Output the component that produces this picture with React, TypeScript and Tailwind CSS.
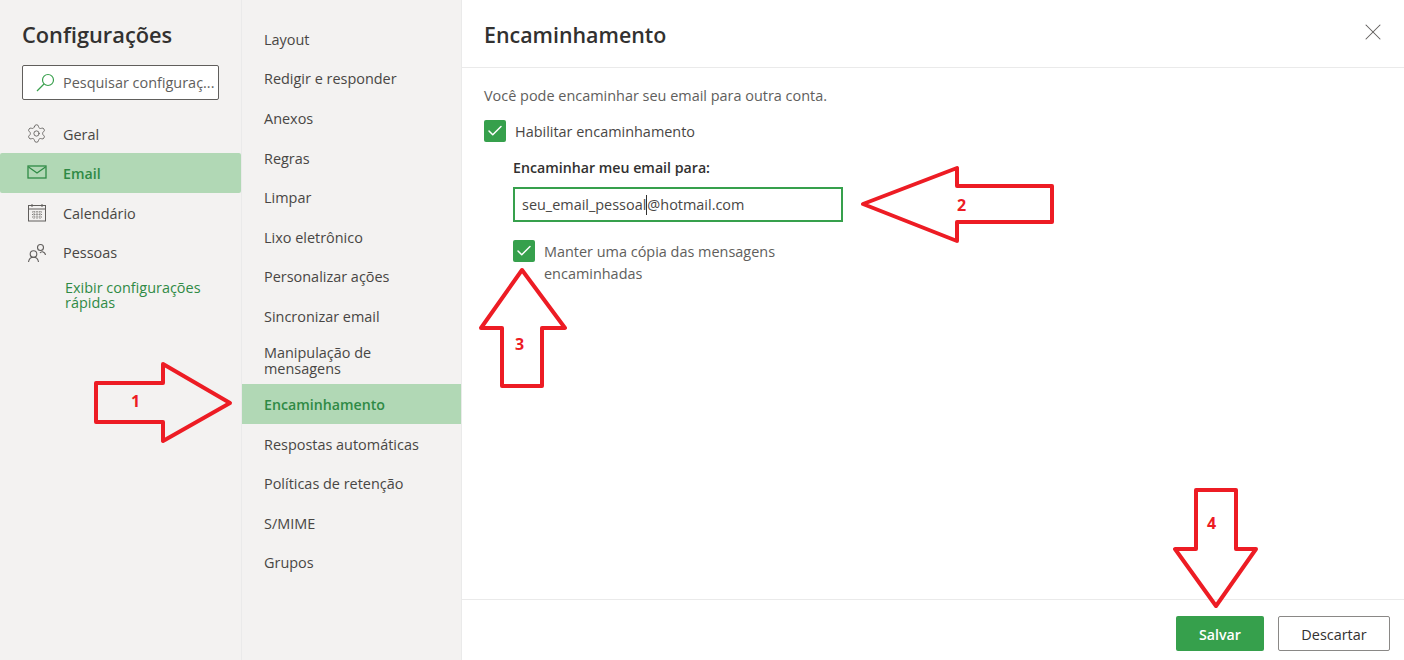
import { Check, Settings, X } from 'lucide-react';

const mailSections = [
  { label: 'Layout', height: 'h-[39px]' },
  { label: 'Redigir e responder', height: 'h-[40px]' },
  { label: 'Anexos', height: 'h-[40px]' },
  { label: 'Regras', height: 'h-[40px]' },
  { label: 'Limpar', height: 'h-[39px] pb-[1px]' },
  { label: 'Lixo eletrônico', height: 'h-[40px]' },
  { label: 'Personalizar ações', height: 'h-[39px] pb-[1px]' },
  { label: 'Sincronizar email', height: 'h-[40px]' },
  { label: 'Manipulação de mensagens', height: 'h-[47px]' },
  { label: 'Encaminhamento', height: 'h-[40px] pt-[1px]', active: true },
  { label: 'Respostas automáticas', height: 'h-[40px] pt-[1px]' },
  { label: 'Políticas de retenção', height: 'h-[39px]' },
  { label: 'S/MIME', height: 'h-[40px] pt-[1px]' },
  { label: 'Grupos', height: 'h-[39px]' },
];

function MailIcon() {
  return (
    <svg width="20" height="14" viewBox="0 0 20 14" fill="none" stroke="#2f8a45" strokeWidth="1.3">
      <rect x="1" y="1" width="18" height="12" />
      <path d="M1.5 2l8.500 6 8.500-6" />
    </svg>
  );
}

function CalendarIcon() {
  return (
    <svg width="20" height="20" viewBox="0 0 20 20" fill="none" stroke="#605e5c" strokeWidth="1">
      <rect x="1.5" y="2.500" width="17" height="15.500" />
      <path d="M1.500 6h17M5 1v3M15 1v3" />
      <path d="M5 9h10M5 11.500h10M5 14h10M7 8v8M10 8v8M13 8v8" strokeWidth="0.8" strokeDasharray="1.2 1" />
    </svg>
  );
}

function PeopleIcon() {
  return (
    <svg width="20" height="20" viewBox="0 0 20 20" fill="none" stroke="#605e5c" strokeWidth="1.1">
      <circle cx="6.500" cy="11" r="3.300" />
      <path d="M1.500 19c.4-3 2.300-4.800 5-4.800s4.600 1.800 5 4.800" />
      <circle cx="13.500" cy="4.500" r="3" />
      <path d="M13 10c.5-.8 1.500-1.400 2.500-1.300 1.800.3 2.700 1.600 3 3.300" />
    </svg>
  );
}

function SearchIcon() {
  return (
    <svg width="19" height="19" viewBox="0 0 19 19" fill="none" stroke="#3aa04e" strokeWidth="1.2">
      <circle cx="12" cy="7" r="5.500" />
      <path d="M8 11l-7 7" />
    </svg>
  );
}

function GreenCheck() {
  return (
    <span className="flex h-[22px] w-[22px] shrink-0 items-center justify-center rounded-[2px] bg-[#36a04c]">
      <Check className="h-[18px] w-[18px] text-white" strokeWidth={2} />
    </span>
  );
}

function Arrow({ points }: { points: string }) {
  return (
    <svg className="absolute left-0 top-0" width="1404" height="660" fill="none" stroke="#ed1c24" strokeWidth="4" strokeLinejoin="round">
      <polygon points={points} />
    </svg>
  );
}

function Step({ className, children }: { className: string; children: string }) {
  return (
    <span className={`absolute text-[16px] font-bold leading-none text-[#ed1c24] ${className}`}>
      {children}
    </span>
  );
}

export default function App() {
  return (
    <div className="relative flex h-[660px] w-[1404px] overflow-hidden bg-white font-['Open_Sans',sans-serif] text-[14.45px] text-[#323130]">
      {/* left nav */}
      <aside className="w-[242px] shrink-0 border-r border-[#eaeaea] bg-[#f3f2f1]">
        <h1 className="pl-[22px] pt-[20px] text-[21.8px] font-semibold leading-[30px] text-[#323130]">Configurações</h1>
        <div className="ml-[22px] mt-[15px] flex h-[35px] w-[197px] items-center gap-[8px] overflow-hidden rounded-[2px] border border-[#605e5c] bg-white pl-[13px]">
          <SearchIcon />
          <span className="whitespace-nowrap text-[#605e5c]">Pesquisar configuraç...</span>
        </div>
        <nav className="mt-[14px]">
          <div className="flex h-[39px] items-center pl-[27px] text-[#484644]">
            <span className="-ml-[1px] w-[37px]"><Settings className="h-[21px] w-[21px] text-[#605e5c]" strokeWidth={1} /></span>
            <span className="mt-[2px]">Geral</span>
          </div>
          <div className="flex h-[40px] items-center rounded-[2px] bg-[#b1d8b5] pl-[27px] text-[14.2px] font-semibold text-[#2f8a45]">
            <span className="-mt-[2px] w-[36px]"><MailIcon /></span>
            <span className="mt-[1px]">Email</span>
          </div>
          <div className="flex h-[40px] items-center pl-[27px] text-[#484644]">
            <span className="w-[36px]"><CalendarIcon /></span>
            <span className="mt-[2px]">Calendário</span>
          </div>
          <div className="flex h-[39px] items-center pl-[27px] text-[#484644]">
            <span className="w-[36px]"><PeopleIcon /></span>
            <span>Pessoas</span>
          </div>
        </nav>
        <p className="ml-[65px] mt-[8px] w-[150px] leading-[15px] text-[#2f8a45]">Exibir configurações rápidas</p>
      </aside>

      {/* mail sections */}
      <nav className="w-[220px] shrink-0 border-r border-[#eaeaea] bg-[#f3f2f1] pt-[20px]">
        {mailSections.map((s) => (
          <div
            key={s.label}
            className={`flex items-center pl-[22px] pr-[20px] leading-[16px] ${s.height} ${
              s.active ? 'bg-[#b1d8b5] text-[14.2px] font-semibold text-[#2f8a45]' : 'text-[#484644]'
            }`}
          >
            {s.label}
          </div>
        ))}
      </nav>

      {/* forwarding panel */}
      <main className="flex min-w-0 flex-1 flex-col">
        <header className="flex h-[68px] shrink-0 items-start justify-between border-b border-[#eaeaea] pl-[22px] pr-[17px] pt-[20px]">
          <h2 className="text-[21.4px] font-semibold leading-[30px]">Encaminhamento</h2>
          <X className="-mt-[2px] h-[28px] w-[28px] text-[#605e5c]" strokeWidth={0.9} />
        </header>
        <section className="flex-1 pl-[22px] pt-[18px]">
          <p className="leading-[20px] text-[#605e5c]">Você pode encaminhar seu email para outra conta.</p>
          <label className="mt-[14px] flex h-[22px] items-start gap-[9px] text-[#484644]">
            <GreenCheck />
            <span className="mt-[1px] leading-[21px]">Habilitar encaminhamento</span>
          </label>
          <div className="ml-[29px] mt-[16px] w-[330px]">
            <div className="text-[14.2px] font-semibold leading-[20px]">Encaminhar meu email para:</div>
            <div className="mt-[9px] flex h-[35px] items-center border-2 border-[#36a04c] pl-[7px] text-[#484644]">
              seu_email_pessoal<span className="h-[20px] w-px bg-[#323130]" />@hotmail.com
            </div>
            <label className="mt-[18px] flex items-start gap-[9px] text-[#605e5c]">
              <GreenCheck />
              <span className="mt-[1px] w-[260px] leading-[22px]">Manter uma cópia das mensagens encaminhadas</span>
            </label>
          </div>
        </section>
        <footer className="flex h-[61px] shrink-0 items-start justify-end gap-[14px] border-t border-[#eaeaea] pr-[14px] pt-[16px]">
          <button className="h-[35px] w-[88px] rounded-[2px] bg-[#36a04c] pt-[2px] text-[14.2px] font-semibold text-white">Salvar</button>
          <button className="h-[35px] w-[112px] rounded-[2px] border border-[#8a8886] bg-white pt-[2px] text-[#323130]">Descartar</button>
        </footer>
      </main>

      {/* tutorial annotations */}
      <Arrow points="96,383 163,383 163,364 230,403 163,441 163,422 96,422" />
      <Arrow points="863,204 957,168 957,186 1052,186 1052,222 957,222 957,241" />
      <Arrow points="522,270 565,328 542,328 542,386 502,386 502,328 481,328" />
      <Arrow points="1196,490 1236,490 1236,549 1256,549 1216,606 1175,549 1196,549" />
      <Step className="left-[131px] top-[393px]">1</Step>
      <Step className="left-[957px] top-[197px]">2</Step>
      <Step className="left-[515px] top-[336px]">3</Step>
      <Step className="left-[1207px] top-[515px]">4</Step>
    </div>
  );
}
